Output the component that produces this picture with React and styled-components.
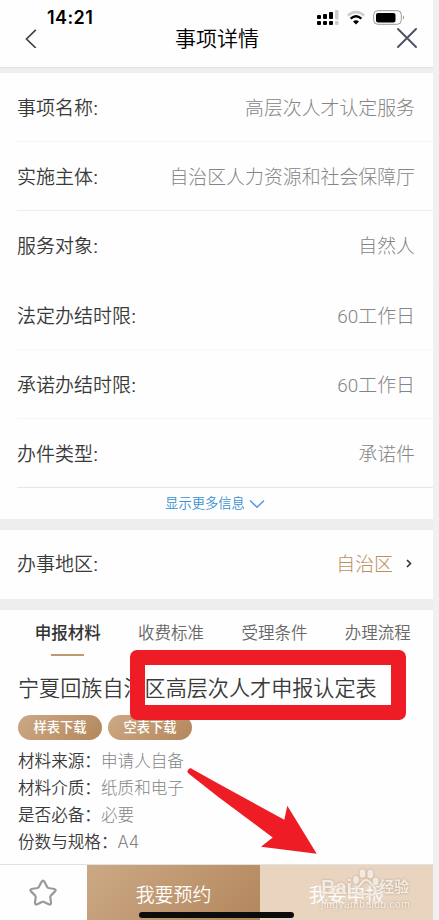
import styled, { createGlobalStyle } from "styled-components";

const GlobalStyle = createGlobalStyle`
  * {
    box-sizing: border-box;
  }

  body {
    margin: 0;
    background: #f0f0f0;
    font-family: "Liberation Sans", "Noto Sans CJK SC", sans-serif;
    font-weight: 350;
    color: #3a3a3a;
  }
`;

const Screen = styled.div`
  position: relative;
  width: 433px;
  height: 920px;
  display: flex;
  flex-direction: column;
  background: #fefefe;
  overflow: hidden;
  white-space: nowrap;
`;

const Header = styled.header`
  height: 68px;
  flex: none;
  display: flex;
  flex-direction: column;
  border-bottom: 1px solid #e2e2e2;
`;

const StatusBar = styled.div`
  height: 25px;
  display: flex;
  align-items: flex-start;
  justify-content: space-between;
  padding: 9px 28px 0 47px;
`;

const Time = styled.span`
  font-family: Inter, "Liberation Sans", sans-serif;
  font-size: 18px;
  font-weight: 600;
  line-height: 18px;
  letter-spacing: 0.4px;
  color: #000;
`;

const NavBar = styled.div`
  height: 26px;
  display: flex;
  align-items: center;
  justify-content: space-between;
  padding: 0 16px 0 25px;
`;

const Title = styled.h1`
  margin: 0;
  padding-top: 1px;
  font-size: 21px;
  font-weight: 350;
  line-height: 26px;
  color: #000;
`;

const Divider = styled.div`
  height: ${(props) => props.$size}px;
  flex: none;
  background: #eeeeee;
`;

const Row = styled.div`
  height: 69.2px;
  flex: none;
  display: flex;
  align-items: center;
  justify-content: space-between;
  margin-left: 17px;
  padding: 0 18px ${(props) => (props.$raised ? 3 : 1)}px 0;
  font-size: 19px;
  border-bottom: 1px solid ${(props) => props.$line || "transparent"};
`;

const Label = styled.span`
  color: #3a3a3a;
`;

const Value = styled.span`
  display: flex;
  align-items: center;
  gap: 12px;
  font-family: Roboto, "Noto Sans CJK SC", sans-serif;
  font-size: 18.9px;
  font-weight: 300;
  color: ${(props) => (props.$accent ? "#b98f60" : "#858585")};
`;

const MoreButton = styled.button`
  height: 31px;
  flex: none;
  display: flex;
  align-items: center;
  justify-content: center;
  gap: 4px;
  padding: 0 3px 2px 0;
  border: none;
  background: none;
  font: inherit;
  font-size: 13.3px;
  font-weight: 350;
  color: #3a92d2;
`;

const Tabs = styled.nav`
  height: 46px;
  flex: none;
  display: grid;
  grid-template-columns: repeat(4, 103.4px);
  padding-left: 16px;
`;

const Tab = styled.div`
  display: flex;
  flex-direction: column;
  align-items: center;
  justify-content: space-between;
  padding-top: 11px;
  font-size: 16.5px;
  line-height: 24px;
  font-weight: ${(props) => (props.$active ? 500 : 350)};
  color: ${(props) => (props.$active ? "#333" : "#686868")};

  &::after {
    content: "";
    width: 33px;
    height: 2px;
    background: ${(props) => (props.$active ? "#c09a6e" : "transparent")};
  }
`;

const Material = styled.section`
  flex: 1;
  padding: 18px 18px 0;
`;

const MaterialName = styled.h2`
  margin: 0 0 11px;
  font-size: 21.1px;
  font-weight: 350;
  line-height: 30px;
  color: #3a3a3a;
`;

const Downloads = styled.div`
  display: flex;
  gap: 6px;
  margin-bottom: 8px;
`;

const DownloadButton = styled.button`
  width: 84px;
  height: 25px;
  padding: 0 0 2px;
  border: none;
  border-radius: 13px;
  background: linear-gradient(135deg, #cba985, #b4875d);
  color: #fff;
  font: inherit;
  font-size: 13.3px;
  font-weight: 500;
`;

const Detail = styled.div`
  height: 27px;
  font-size: 16.6px;
  line-height: 27px;

  span {
    font-family: Inter, "Noto Sans CJK SC", sans-serif;
    font-weight: 300;
    color: #858585;
  }
`;

const Footer = styled.footer`
  height: 56px;
  flex: none;
  display: grid;
  grid-template-columns: 87px 173px 173px;
  border-top: 1px solid #e2e2e2;
`;

const Favorite = styled.div`
  display: flex;
  align-items: center;
  justify-content: center;
  padding-right: 1px;
`;

const Action = styled.div`
  display: flex;
  align-items: center;
  justify-content: center;
  padding-top: 2px;
  font-size: 18.9px;
  color: #fff;
  background: ${(props) =>
    props.$pale ? "#e8d4bf" : "linear-gradient(135deg, #cba985, #b4875d)"};
`;

const HomeIndicator = styled.div`
  position: absolute;
  left: 139px;
  top: 912px;
  width: 155px;
  height: 6px;
  border-radius: 3px;
  background: #0c0c0c;
`;

const Highlight = styled.div`
  position: absolute;
  left: 130px;
  top: 650px;
  width: 276px;
  height: 70px;
  border: 15px solid #ee1c25;
  border-radius: 7px;
`;

const Arrow = styled.svg`
  position: absolute;
  left: 180px;
  top: 760px;
`;

const Watermark = styled.div`
  position: absolute;
  left: 321px;
  top: 865px;
  width: 92px;
  height: 46px;
  color: rgba(250, 244, 238, 0.85);
  filter: drop-shadow(0 0 0.8px rgba(140, 115, 90, 0.6));
`;

const Brand = styled.div`
  display: flex;
  align-items: center;
  padding-top: 11px;
  font-size: 20px;
  font-weight: 700;
  line-height: 22px;

  svg {
    flex: none;
    margin: -11px 0 0;
  }
`;

const BrandSuffix = styled.span`
  font-size: 15px;
  font-weight: 700;
`;

const Site = styled.div`
  margin-top: 1px;
  font-size: 10.4px;
  font-weight: 400;
  line-height: 12px;
  letter-spacing: 0.32px;
`;

const rows = [
  { label: "事项名称:", value: "高层次人才认定服务", line: "#f4f4f4" },
  { label: "实施主体:", value: "自治区人力资源和社会保障厅", line: "#ededed" },
  { label: "服务对象:", value: "自然人", line: "#fcfcfc" },
  { label: "法定办结时限:", value: "60工作日", line: "#f7f7f7" },
  { label: "承诺办结时限:", value: "60工作日", line: "#f5f5f5" },
  { label: "办件类型:", value: "承诺件", line: "#e6e6e6" },
];

const tabs = ["申报材料", "收费标准", "受理条件", "办理流程"];

const details = [
  { label: "材料来源：", value: "申请人自备" },
  { label: "材料介质：", value: "纸质和电子" },
  { label: "是否必备：", value: "必要" },
  { label: "份数与规格：", value: "A4" },
];

const StatusIcons = () => (
  <svg width="90" height="18" viewBox="0 0 90 18">
    <g fill="#000">
      <rect x="2" y="6" width="4" height="4" rx="1" />
      <rect x="8" y="5" width="4" height="5" rx="1" />
      <rect x="14" y="3" width="4" height="7" rx="1" />
      <rect x="2" y="12" width="4" height="4" rx="1" />
      <rect x="8" y="12" width="4" height="4" rx="1" />
      <rect x="14" y="12" width="4" height="4" rx="1" />
    </g>
    <rect x="20" y="1" width="3.5" height="9.5" rx="1" fill="#ccc" />
    <rect x="20" y="12" width="3.5" height="4" rx="1" fill="#ccc" />
    <g fill="none" strokeWidth="2.4">
      <path d="M32.7 6.5Q41 -0.5 49.3 6.5" stroke="#ccc" />
      <path d="M35.6 9.6Q41 5 46.4 9.6" stroke="#000" />
    </g>
    <path d="M38 12.4Q41 10 44 12.4L41 15.6Z" fill="#000" />
    <rect x="58.7" y="1.7" width="27.6" height="13.6" rx="4" fill="none" stroke="#999" />
    <rect x="61" y="4" width="19.5" height="9.5" rx="2" fill="#000" />
    <path d="M88 6.5Q90 8.5 88 10.5Z" fill="#888" />
  </svg>
);

export default function App() {
  return (
    <>
      <GlobalStyle />
      <Screen>
        <Header>
          <StatusBar>
            <Time>14:21</Time>
            <StatusIcons />
          </StatusBar>
          <NavBar>
            <svg width="12" height="20" viewBox="0 0 12 20">
              <path d="M10.8 1.8L1.5 11L10.8 20" fill="none" stroke="#444" strokeWidth="1.7" />
            </svg>
            <Title>事项详情</Title>
            <svg width="20" height="20" viewBox="0 0 20 20">
              <path
                d="M1 1L19 19M19 1L1 19"
                fill="none"
                stroke="#4b5166"
                strokeWidth="1.9"
                strokeLinecap="round"
              />
            </svg>
          </NavBar>
        </Header>
        <Divider $size={5} />

        {rows.map((row) => (
          <Row key={row.label} $line={row.line}>
            <Label>{row.label}</Label>
            <Value>{row.value}</Value>
          </Row>
        ))}
        <MoreButton>
          显示更多信息
          <svg width="16" height="10" viewBox="0 0 16 10">
            <path d="M1 2.5L8 9.2L15 2.5" fill="none" stroke="#5595ee" strokeWidth="1.5" />
          </svg>
        </MoreButton>
        <Divider $size={11} />

        <Row $raised>
          <Label>办事地区:</Label>
          <Value $accent>
            自治区
            <svg width="10" height="10" viewBox="0 0 10 10">
              <path d="M2 2L5.5 5.5L2 9" fill="none" stroke="#333" strokeWidth="1.6" />
            </svg>
          </Value>
        </Row>
        <Divider $size={11} />

        <Tabs>
          {tabs.map((tab, i) => (
            <Tab key={tab} $active={i === 0}>
              {tab}
            </Tab>
          ))}
        </Tabs>
        <Material>
          <MaterialName>宁夏回族自治区高层次人才申报认定表</MaterialName>
          <Downloads>
            <DownloadButton>样表下载</DownloadButton>
            <DownloadButton>空表下载</DownloadButton>
          </Downloads>
          {details.map((detail) => (
            <Detail key={detail.label}>
              {detail.label}
              <span>{detail.value}</span>
            </Detail>
          ))}
        </Material>

        <Footer>
          <Favorite>
            <svg width="30" height="30" viewBox="0 0 30 30">
              <path
                d="M13.6 3.8Q15 1.6 16.4 3.8L19.2 9Q19.6 9.8 20.6 10L26.3 11Q28.6 11.6 27 13.4L22.8 17.6Q22.2 18.3 22.3 19.2L23 24.8Q23 27.3 20.8 26.3L16 23.9Q15 23.4 14 23.9L9.2 26.3Q7 27.3 7 24.8L7.7 19.2Q7.8 18.3 7.2 17.6L3 13.4Q1.4 11.6 3.7 11L9.4 10Q10.4 9.8 10.8 9Z"
                fill="none"
                stroke="#999"
                strokeWidth="2.2"
                strokeLinejoin="round"
              />
            </svg>
          </Favorite>
          <Action>我要预约</Action>
          <Action $pale>我要申报</Action>
        </Footer>

        <HomeIndicator />
        <Highlight />
        <Arrow width="140" height="100" viewBox="0 0 140 100">
          <path
            d="M12.5 9.3L39 24L104.3 59.7L107.3 45.7L136.7 93.8L81 86.7L92.7 77.5L39 37.5L8.5 13.5A2.8 2.8 0 0 1 12.5 9.3Z"
            fill="#ee1c25"
          />
        </Arrow>
        <Watermark>
          <Brand>
            Bai
            <svg width="27" height="29" viewBox="0 0 27 29" fill="currentColor">
              <ellipse cx="4" cy="13" rx="2.9" ry="4" />
              <ellipse cx="10.5" cy="6.5" rx="3" ry="4.2" />
              <ellipse cx="18.3" cy="7" rx="3" ry="4.2" />
              <ellipse cx="23.5" cy="14.5" rx="2.9" ry="4" />
              <path
                d="M14 13C10.5 13 9.5 17 6.5 19.5C2.5 23 5 28 9 27.5C12.5 27 15.5 27 19 27.5C23.5 28 25.5 23.5 22 20C19 17 17.5 13 14 13Z"
                fill="none"
                stroke="currentColor"
                strokeWidth="2.2"
              />
            </svg>
            <BrandSuffix>经验</BrandSuffix>
          </Brand>
          <Site>jingyan.baidu.com</Site>
        </Watermark>
      </Screen>
    </>
  );
}
